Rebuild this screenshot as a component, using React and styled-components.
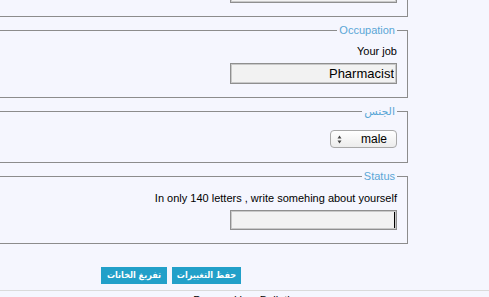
import React from 'react'
import styled, { createGlobalStyle } from 'styled-components'

const GlobalStyle = createGlobalStyle`
  html, body {
    margin: 0;
    padding: 0;
    background: #f5f6fe;
    overflow: hidden;
  }
  body {
    font-family: Tahoma, "Liberation Sans", "DejaVu Sans", sans-serif;
    font-size: 11px;
    color: #000;
  }
`

const Page = styled.div`
  direction: rtl;
  width: 474px;
  margin: -57px 0 0 -66px;
`

const Fieldset = styled.fieldset`
  margin: 0 0 7px 0;
  padding: 4px 10px 13px 10px;
  border: 1px solid #8c8c8c;
  text-align: right;
`

const Legend = styled.legend`
  padding: 0 2px;
  color: #5aa6d6;
  font-size: 11px;
  line-height: 13px;
`

const Label = styled.div`
  line-height: 13px;
  margin: ${({ $top }) => $top}px 0 5px 0;
  white-space: nowrap;
`

const TextInput = styled.input`
  box-sizing: border-box;
  width: 167px;
  height: ${({ $short }) => ($short ? '20px' : '21px')};
  margin: 0;
  padding: 0 2px;
  border: 1px solid #8f8f8f;
  box-shadow: inset 0 0 0 1px #c9c9c9;
  background: #f2f2f2;
  font-family: Tahoma, "Liberation Sans", sans-serif;
  font-size: 13px;
  color: #000;
  direction: rtl;
  outline: none;
  display: block;
`

const InputWrap = styled.div`
  position: relative;
  width: 167px;
  &::after {
    content: '';
    display: ${({ $caret }) => ($caret ? 'block' : 'none')};
    position: absolute;
    top: 2px;
    right: 2px;
    width: 1px;
    height: 16px;
    background: #000;
  }
`

const SelectBox = styled.div`
  box-sizing: border-box;
  width: 67px;
  height: 18px;
  margin: 8px 0 1px 0;
  padding: 0 9px 0 6px;
  border: 1px solid #a8a8a8;
  border-radius: 4px;
  background: linear-gradient(#ffffff, #ececec);
  display: flex;
  align-items: center;
  justify-content: space-between;
  font-size: 12px;
  line-height: 16px;
`

const Arrows = styled.svg`
  display: block;
`

const Actions = styled.div`
  display: flex;
  justify-content: center;
  gap: 5px;
  padding: 16px 0 6px 0;
`

const Button = styled.button`
  height: 17px;
  width: ${({ $w }) => $w}px;
  margin: 0;
  padding: 0;
  border: none;
  background: #22a0c9;
  color: #fff;
  font-family: "DejaVu Sans Condensed", "DejaVu Sans", sans-serif;
  font-stretch: condensed;
  font-size: 9px;
  font-weight: bold;
  line-height: 17px;
  white-space: nowrap;
  overflow: hidden;
`

const Footer = styled.div`
  border-top: 1px solid #dadada;
  text-align: center;
  padding-top: 3px;
  line-height: 13px;
`

function Field({ legend, label, value, caret, top = 4 }) {
  return (
    <Fieldset>
      <Legend>{legend}</Legend>
      <Label $top={top}>{label}</Label>
      <InputWrap $caret={caret}>
        <TextInput $short={caret} defaultValue={value} />
      </InputWrap>
    </Fieldset>
  )
}

export default function App() {
  return (
    <>
      <GlobalStyle />
      <Page>
        <Field legend="Hobbies" label="Your hobbies" value="Reading, Surfing, poetry" />
        <Field legend="Occupation" label="Your job" value="Pharmacist" />
        <Fieldset>
          <Legend>الجنس</Legend>
          <SelectBox>
            <span>male</span>
            <Arrows width="5" height="9" viewBox="0 0 5 9">
              <path d="M2.5 0.5 L4.5 3.5 L0.5 3.5 Z M2.5 8.5 L4.5 5.5 L0.5 5.5 Z" fill="#444" />
            </Arrows>
          </SelectBox>
        </Fieldset>
        <Field
          legend="Status"
          label="In only 140 letters , write somehing about yourself"
          value=""
          caret
          top={5}
        />
        <Actions>
          <Button $w={69}>حفظ التغييرات</Button>
          <Button $w={66}>تفريغ الخانات</Button>
        </Actions>
      </Page>
      <Footer>Powered by vBulletin</Footer>
    </>
  )
}
